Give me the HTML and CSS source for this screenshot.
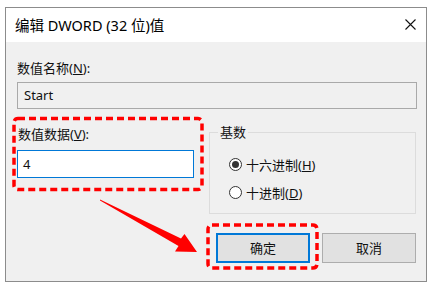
FILE: index.html
```html
<!DOCTYPE html>
<html lang="zh-CN">
<head>
<meta charset="utf-8">
<title>编辑 DWORD (32 位)值</title>
<link rel="stylesheet" href="styles.css">
</head>
<body>
<div class="dialog">
  <div class="titlebar">
    <span class="title">编辑 DWORD (32 位)值</span>
    <span class="close">
      <svg width="11" height="11" viewBox="0 0 11 11"><path d="M0.5 0.5 L10.5 10.5 M10.5 0.5 L0.5 10.5" stroke="#111" stroke-width="1.1" fill="none"/></svg>
    </span>
  </div>
  <div class="content">
    <div class="label">数值名称(<u>N</u>):</div>
    <div class="field readonly">Start</div>
    <div class="row">
      <div class="datacol">
        <div class="label">数值数据(<u>V</u>):</div>
        <div class="field active">4</div>
      </div>
      <fieldset class="group">
        <legend>基数</legend>
        <div class="radio first"><span class="dot checked"></span><span>十六进制(<u>H</u>)</span></div>
        <div class="radio"><span class="dot"></span><span>十进制(<u>D</u>)</span></div>
      </fieldset>
    </div>
    <div class="buttons">
      <div class="btn default">确定</div>
      <div class="btn">取消</div>
    </div>
  </div>
</div>
<svg class="annot" width="435" height="290" viewBox="0 0 435 290">
  <rect x="14" y="118.5" width="188" height="71" rx="4" fill="none" stroke="#f00" stroke-width="3.5" stroke-dasharray="7 4"/>
  <rect x="208" y="225" width="109" height="43" rx="4" fill="none" stroke="#f00" stroke-width="3.5" stroke-dasharray="7 4"/>
  <polygon points="100,199.6 181,238.5 184.5,234 197,252 175,251.5 178.5,246 100,200.6" fill="#f00"/>
</svg>
</body>
</html>
```
FILE: styles.css
```css
html, body {
  margin: 0;
  padding: 0;
  background: #ffffff;
}
body {
  width: 435px;
  height: 290px;
  overflow: hidden;
  position: relative;
  font-family: "Noto Sans", "Noto Sans CJK SC", sans-serif;
  font-size: 13px;
  color: #111;
}
.dialog {
  margin: 7px 0 0 5px;
  width: 420px;
  height: 273px;
  border: 1px solid #8c8c8c;
  display: flex;
  flex-direction: column;
  background: #f0f0f0;
}
.titlebar {
  height: 34px;
  background: #ffffff;
  display: flex;
  align-items: center;
  justify-content: space-between;
  padding: 0 10px 0 9px;
}
.title {
  font-size: 14.5px;
  color: #000;
  margin-top: -2px;
}
.close {
  display: flex;
  margin-top: -2px;
}
.content {
  flex: 1;
  padding: 17px 9px 0 11px;
  display: flex;
  flex-direction: column;
}
.label {
  height: 18px;
  line-height: 18px;
}
.field {
  box-sizing: border-box;
  margin-top: 5px;
  height: 27px;
  line-height: 25px;
  padding: 0 6px;
  border: 1px solid #a9a9a9;
  background: #f0f0f0;
}
.row {
  display: flex;
  margin-top: 14px;
}
.datacol {
  width: 178px;
  padding-top: 2px;
}
.datacol .label {
  padding-left: 1px;
}
.field.active {
  margin-top: 7px;
  height: 28px;
  line-height: 26px;
  background: #ffffff;
  border: 1px solid #0078d7;
  padding: 0 5px;
  margin-right: 1px;
}
.group {
  margin: 0 0 0 14px;
  width: 207px;
  box-sizing: border-box;
  height: 91px;
  border: 1px solid #dcdcdc;
  padding: 0 0 0 8px;
}
.group legend {
  padding: 0 2px;
  height: 18px;
  line-height: 18px;
}
.radio {
  display: flex;
  align-items: center;
  height: 20px;
  margin-top: 8px;
  margin-left: 11px;
}
.radio.first {
  margin-top: 13px;
}
.dot {
  box-sizing: border-box;
  width: 13px;
  height: 13px;
  border: 1px solid #333;
  border-radius: 50%;
  background: #fff;
  margin-right: 4px;
  display: flex;
  align-items: center;
  justify-content: center;
}
.dot.checked::after {
  content: "";
  width: 7px;
  height: 7px;
  border-radius: 50%;
  background: #333;
}
.buttons {
  display: flex;
  justify-content: flex-end;
  gap: 12px;
  margin-top: 19px;
  margin-right: 1px;
}
.btn {
  box-sizing: border-box;
  width: 94px;
  height: 30px;
  line-height: 28px;
  text-align: center;
  background: #e1e1e1;
  border: 1px solid #adadad;
}
.btn.default {
  border: 2px solid #0078d7;
  line-height: 26px;
}
.annot {
  position: absolute;
  left: 0;
  top: 0;
  pointer-events: none;
}
```
